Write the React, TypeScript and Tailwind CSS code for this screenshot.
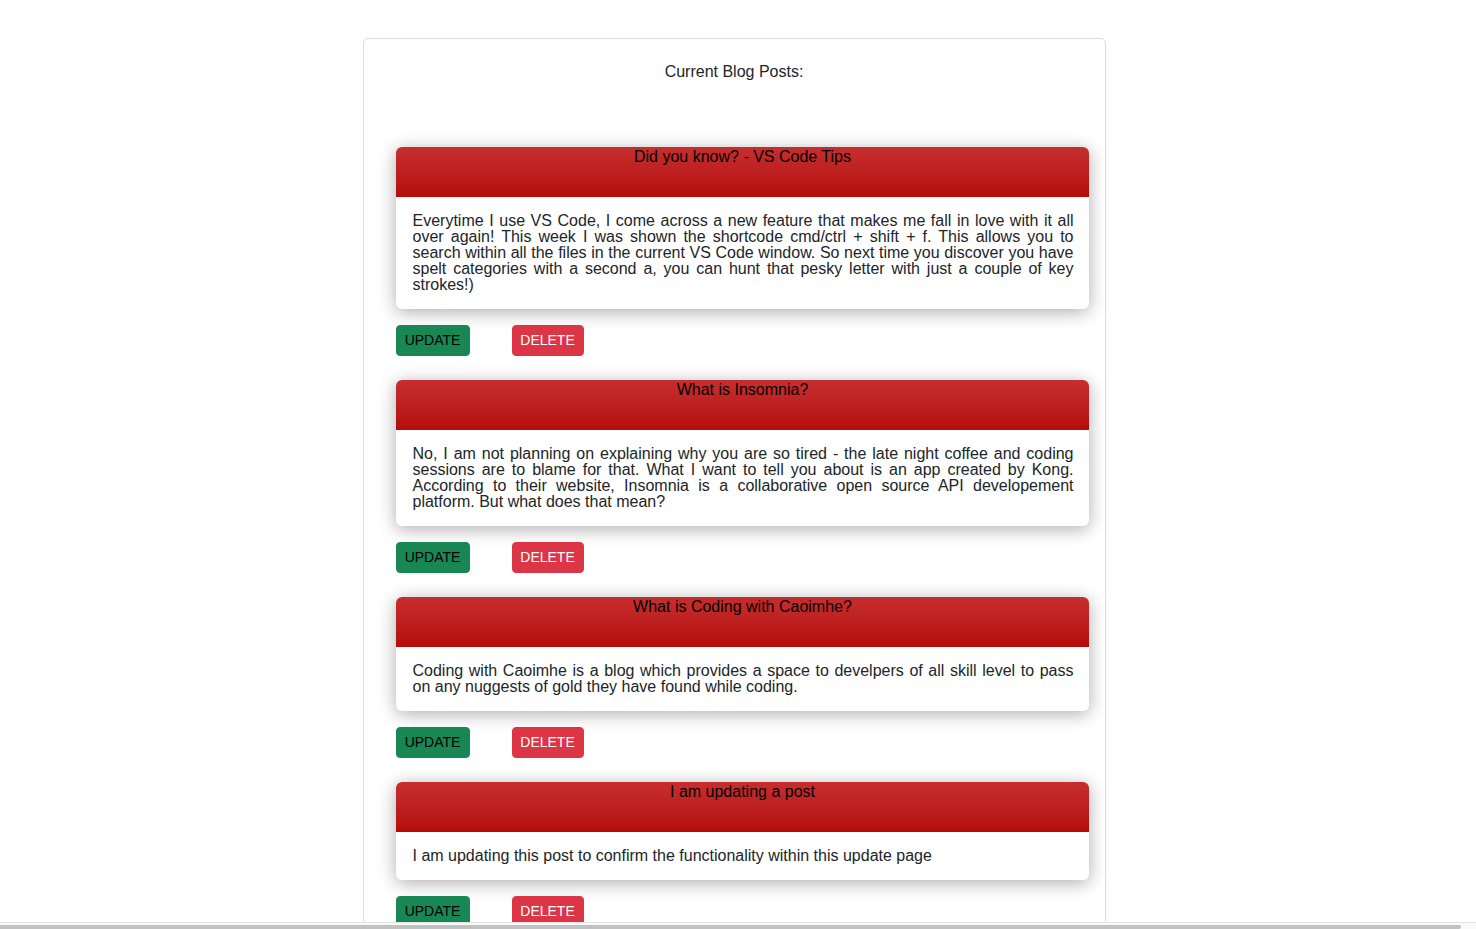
import React from 'react';

interface Post {
  id: number;
  title: string;
  body: string;
}

const POSTS: Post[] = [
  {
    id: 1,
    title: 'Did you know? - VS Code Tips',
    body: 'Everytime I use VS Code, I come across a new feature that makes me fall in love with it all over again! This week I was shown the shortcode cmd/ctrl + shift + f. This allows you to search within all the files in the current VS Code window. So next time you discover you have spelt categories with a second a, you can hunt that pesky letter with just a couple of key strokes!)',
  },
  {
    id: 2,
    title: 'What is Insomnia?',
    body: 'No, I am not planning on explaining why you are so tired - the late night coffee and coding sessions are to blame for that. What I want to tell you about is an app created by Kong. According to their website, Insomnia is a collaborative open source API developement platform. But what does that mean?',
  },
  {
    id: 3,
    title: 'What is Coding with Caoimhe?',
    body: 'Coding with Caoimhe is a blog which provides a space to develpers of all skill level to pass on any nuggests of gold they have found while coding.',
  },
  {
    id: 4,
    title: 'I am updating a post',
    body: 'I am updating this post to confirm the functionality within this update page',
  },
];

function PostCard({ post }: { post: Post }) {
  return (
    <div className="mb-[24px]">
      <div className="rounded-[6px] bg-white shadow-[0_3px_18px_rgba(0,0,0,0.33)]">
        <div className="h-[50px] rounded-t-[6px] bg-gradient-to-b from-[#c62e2e] to-[#b40a0a] pt-[1px] pl-[1px] text-center text-[16px] leading-[18px] text-black">
          {post.title}
        </div>
        <p className="pl-[17px] pr-[15px] pt-[16px] pb-[16px] text-justify text-[16px] leading-[16px] text-[#212529]">
          {post.body}
        </p>
      </div>
      <div className="mt-4 flex gap-[42px]">
        <button className="h-[31px] w-[74px] rounded-[4px] border border-[#198754] bg-[#198754] text-[14px] text-black">
          UPDATE
        </button>
        <button className="h-[31px] w-[72px] rounded-[4px] border border-[#dc3545] bg-[#dc3545] text-[14px] text-white">
          DELETE
        </button>
      </div>
    </div>
  );
}

export default function App() {
  return (
    <div className="h-[929px] overflow-hidden bg-white pr-2 pt-[38px] font-['Liberation_Sans',Arial,sans-serif]">
      <div className="mx-auto w-[743px] rounded-[5px] border border-[#dcdcdc] pl-8 pr-[16px]">
        <h1 className="-ml-[16px] pt-[24px] pb-[66px] text-center text-[16px] font-normal leading-[18px] text-[#212529]">
          Current Blog Posts:
        </h1>
        {POSTS.map((p) => (
          <PostCard key={p.id} post={p} />
        ))}
      </div>
      <div className="fixed bottom-0 left-0 right-0 h-[7px] border-t border-[#e3e3e3] bg-[#fafafa] pt-[2px]">
        <div className="h-[4px] w-[1461px] rounded-r-full bg-[#c1c1c1]" />
      </div>
    </div>
  );
}
